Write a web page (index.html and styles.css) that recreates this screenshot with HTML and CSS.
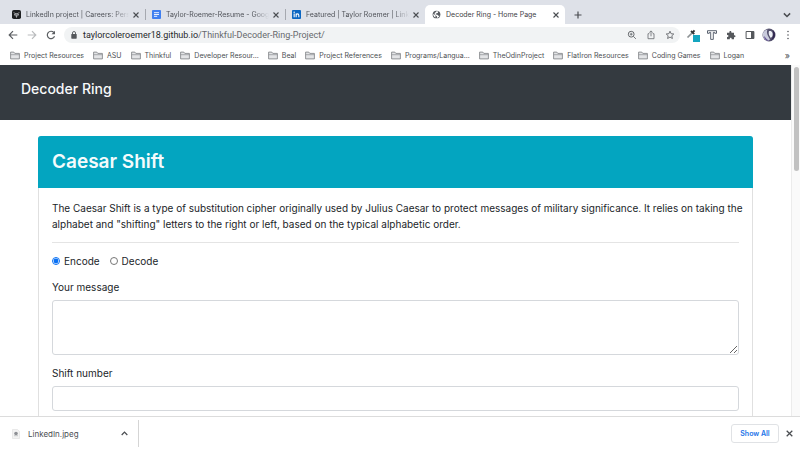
FILE: index.html
```html
<!DOCTYPE html>
<html lang="en">
<head>
<meta charset="utf-8">
<title>Decoder Ring - Home Page</title>
<link rel="stylesheet" href="styles.css">
</head>
<body>
<svg class="defs" aria-hidden="true">
  <symbol id="close" viewBox="0 0 8 8"><path d="M1.500 1.500l5 5M6.500 1.500l-5 5" fill="none" stroke="currentColor" stroke-width="1.100"/></symbol>
  <symbol id="folder" viewBox="0 0 10 9"><path d="M.6 7.9V1.1h3.2l1 1.3h4.6v5.5z" fill="#e3e4e6" stroke="#7b7e82" stroke-width=".8"/><path d="M.6 3.7h8.8" stroke="#8b8e92" stroke-width=".7"/></symbol>
</svg>

<nav class="tabs" aria-label="Tabs">
  <div class="tab">
    <svg class="favicon" viewBox="0 0 10 10"><rect width="10" height="10" rx="2" fill="#1e2022"/><path d="M2 2.5l1.5 1.6h3L8 2.5M3.5 4.1L5 6l1.500-1.900M5 6v2.500M2.500 4.500L4 7M7.500 4.500L6 7" fill="none" stroke="#d8dadd" stroke-width=".8"/></svg>
    <span class="tab-title">LinkedIn project | Careers: Pers</span>
    <button class="tab-close" aria-label="Close tab"><svg><use href="#close"/></svg></button>
  </div>
  <div class="tab divided">
    <svg class="favicon" viewBox="0 0 10 10"><rect width="10" height="10" rx="1" fill="#3f7ff0"/><path d="M2.200 3h5.600M2.200 5h5.600M2.200 7h3.600" stroke="#fff"/></svg>
    <span class="tab-title">Taylor-Roemer-Resume - Goog</span>
    <button class="tab-close" aria-label="Close tab"><svg><use href="#close"/></svg></button>
  </div>
  <div class="tab divided">
    <svg class="favicon" viewBox="0 0 10 10"><rect width="10" height="10" rx="1" fill="#0b66c2"/><path d="M2.400 4v4M4.600 8V4M4.600 6c0-2.300 3-2.300 3 0v2" fill="none" stroke="#fff" stroke-width="1.200"/><circle cx="2.400" cy="2.400" r=".8" fill="#fff"/></svg>
    <span class="tab-title">Featured | Taylor Roemer | Link</span>
    <button class="tab-close" aria-label="Close tab"><svg><use href="#close"/></svg></button>
  </div>
  <div class="tab active">
    <svg class="favicon" viewBox="0 0 10 10"><circle cx="5" cy="5" r="4.300" fill="#55595e"/><path d="M1.500 4.200l2.200 1.700.3 2.500C2.200 8 1.100 6 1.500 4.200zM5 1.500l2 .3-.6 1.500-2 .5-.3 1.200 2 .2.900 1.300 1.300-.2C7.600 8 6.500 8.500 5.500 8.600l.1-1.500-2-1.600-.8-1.700z" fill="#fff"/></svg>
    <span class="tab-title">Decoder Ring - Home Page</span>
    <button class="tab-close" aria-label="Close tab"><svg><use href="#close"/></svg></button>
  </div>
  <button class="new-tab" aria-label="New tab"><svg viewBox="0 0 8 8"><path d="M4 .5v7M.5 4h7" stroke="currentColor" stroke-width="1.200"/></svg></button>
  <button class="tab-search" aria-label="Search tabs"><svg viewBox="0 0 8 8"><path d="M1.500 2.700L4 5.200l2.500-2.500" fill="none" stroke="currentColor" stroke-width="1.200"/></svg></button>
</nav>

<div class="toolbar">
  <button aria-label="Back"><svg viewBox="0 0 10 10"><path d="M9.300 5H1.500M5 1.200L1.200 5 5 8.800" fill="none" stroke="#5a5d61" stroke-width="1.200"/></svg></button>
  <button aria-label="Forward"><svg viewBox="0 0 10 10"><path d="M.7 5h7.800M5 1.200L8.800 5 5 8.800" fill="none" stroke="#babcbe" stroke-width="1.200"/></svg></button>
  <button aria-label="Reload"><svg viewBox="0 0 10 10"><path d="M8.500 6.200A3.700 3.700 0 1 1 7.800 2.500" fill="none" stroke="#5a5d61" stroke-width="1.200"/><path d="M9 .8v3.500H5.500z" fill="#5a5d61"/></svg></button>
  <div class="omnibox">
    <svg class="lock" viewBox="0 0 6 8"><rect x=".3" y="3" width="5.400" height="4.700" rx=".6" fill="#55585c"/><path d="M1.500 3V2a1.500 1.500 0 0 1 3 0v1" fill="none" stroke="#55585c" stroke-width=".9"/></svg>
    <a class="url" href="#"><span>taylorcoleroemer18.github.io</span>/Thinkful-Decoder-Ring-Project/</a>
    <button aria-label="Zoom"><svg viewBox="0 0 10 10"><circle cx="4.200" cy="4.200" r="2.900" fill="none" stroke="#696c70"/><path d="M6.300 6.300l2.600 2.600M2.800 4.200h2.800M4.200 2.800v2.800" stroke="#696c70" stroke-width=".9"/></svg></button>
    <button aria-label="Share"><svg viewBox="0 0 10 10"><path d="M3.300 3.700H2v5h6v-5H6.700M5 6.300V1M3.300 2.500L5 .9l1.700 1.600" fill="none" stroke="#74777b" stroke-width=".9"/></svg></button>
    <button aria-label="Bookmark"><svg viewBox="0 0 10 10"><path d="M5 1.200l1.100 2.500 2.700.3-2 1.800.6 2.700L5 7.100 2.600 8.500l.6-2.700-2-1.800 2.700-.3z" fill="none" stroke="#66696d" stroke-width=".9"/></svg></button>
  </div>
  <div class="extensions">
    <button class="wide" aria-label="Colour picker"><svg viewBox="0 0 14 14"><rect x="7" y="7" width="7" height="7" fill="#14a5bf"/><path d="M1.500 9.500l4.700-4.700" stroke="#8d9295" stroke-width="1.700"/><path d="M5 3l3.200 3.200M6.300 5L8.500 2.300" stroke="#343638" stroke-width="1.900"/></svg></button>
    <button aria-label="Font inspector"><svg viewBox="0 0 10 10"><path d="M.5 3.300V.7h9v2.600H7.700V2.400H6.300v7H3.700v-7H2.300v.9z" fill="#fff" stroke="#4b5262" stroke-width=".9"/></svg></button>
    <button aria-label="Extensions"><svg viewBox="0 0 10 10"><path d="M1 2.800h2.400c-.6-2.400 2.500-2.400 2 0H8v2.400c2-.4 2 2.300 0 1.900V9.300H5.700c.3-2-2.300-2-1.900 0H1V7c2 .2 2-2.200 0-1.900z" fill="#55585c"/></svg></button>
    <button aria-label="Side panel"><svg viewBox="0 0 10 10"><path d="M1.100 1.500h7.800v7H1.100z" fill="none" stroke="#55585c"/><path d="M6 1.500h3v7H6z" fill="#55585c"/></svg></button>
    <button class="wide" aria-label="Profile"><svg viewBox="0 0 14 14"><circle cx="7" cy="7" r="6.500" fill="#56536f"/><path d="M1 5C2.300 2.500 4 1.700 5.500 1.500c-1 2-.5 4 .3 6L8 11.500 6 13C2.500 12 0 8.500 1 5z" fill="#c9cbdc"/><path d="M7 3c3-.7 4.500 2 3.300 5.500L8.700 10C8 8 6 7 7 3z" fill="#eef0f6"/><path d="M10.500 2c3 2 3.300 6 1 8.500L9 12.500c2-3 3-6 1.500-10.500z" fill="#30264f"/><path d="M2.500 8c1 2 2.500 3.500 4.500 5C4 13 1.500 10.500 2.500 8z" fill="#655594"/></svg></button>
    <button aria-label="Menu"><svg viewBox="0 0 10 10"><g fill="#5b5e62"><circle cx="5" cy="1.500" r=".8"/><circle cx="5" cy="5" r=".8"/><circle cx="5" cy="8.500" r=".8"/></g></svg></button>
  </div>
</div>

<nav class="bookmarks" aria-label="Bookmarks">
  <a href="#"><svg><use href="#folder"/></svg>Project Resources</a>
  <a href="#"><svg><use href="#folder"/></svg>ASU</a>
  <a href="#"><svg><use href="#folder"/></svg>Thinkful</a>
  <a href="#"><svg><use href="#folder"/></svg>Developer Resour...</a>
  <a href="#"><svg><use href="#folder"/></svg>Beal</a>
  <a href="#"><svg><use href="#folder"/></svg>Project References</a>
  <a href="#"><svg><use href="#folder"/></svg>Programs/Langua...</a>
  <a href="#"><svg><use href="#folder"/></svg>TheOdinProject</a>
  <a href="#"><svg><use href="#folder"/></svg>FlatIron Resources</a>
  <a href="#"><svg><use href="#folder"/></svg>Coding Games</a>
  <a href="#"><svg><use href="#folder"/></svg>Logan</a>
  <button class="more" aria-label="More bookmarks">»</button>
</nav>

<div class="viewport">
  <div class="page">
    <header class="navbar"><a href="#">Decoder Ring</a></header>
    <main>
      <section class="card">
        <h1>Caesar Shift</h1>
        <form class="card-body">
          <p>The Caesar Shift is a type of substitution cipher originally used by Julius Caesar to protect messages of military significance. It relies on taking the alphabet and "shifting" letters to the right or left, based on the typical alphabetic order.</p>
          <hr>
          <div class="choices">
            <input type="radio" name="mode" id="encode" checked><label for="encode">Encode</label>
            <input type="radio" name="mode" id="decode"><label for="decode">Decode</label>
          </div>
          <div class="field"><label for="message">Your message</label><textarea id="message"></textarea></div>
          <div class="field"><label for="shift">Shift number</label><input type="text" id="shift"></div>
        </form>
      </section>
    </main>
  </div>
  <div class="scrollbar"><div class="thumb"></div></div>
</div>

<footer class="downloads">
  <div class="download">
    <svg class="file" viewBox="0 0 10 10"><path d="M1.500.5h5L8.500 2.500v7h-7z" fill="#f3f3f3" stroke="#dedede" stroke-width=".6"/><circle cx="5" cy="4.500" r="1.800" fill="#8e9095"/><path d="M3 6.700h4" stroke="#b8babd" stroke-width=".8"/></svg>
    <span>LinkedIn.jpeg</span>
    <button aria-label="Download options"><svg viewBox="0 0 8 8"><path d="M1.500 5.300L4 2.800l2.500 2.500" fill="none" stroke="currentColor" stroke-width="1.100"/></svg></button>
  </div>
  <button class="show-all">Show All</button>
  <button class="dismiss" aria-label="Close downloads"><svg><use href="#close"/></svg></button>
</footer>
</body>
</html>
```
FILE: styles.css
```css
* { box-sizing: border-box; }

body {
  margin: 0;
  height: 100vh;
  display: flex;
  flex-direction: column;
  overflow: hidden;
  background: #fff;
  color: #212529;
  font-family: Inter, "Liberation Sans", sans-serif;
  font-size: 7px;
}

button {
  display: flex;
  align-items: center;
  justify-content: center;
  flex: none;
  padding: 0;
  border: 0;
  background: none;
  color: #4a4d51;
  font: inherit;
}

a { color: inherit; text-decoration: none; }
svg { display: block; flex: none; }
.defs { position: absolute; width: 0; height: 0; }

/* Tab strip */
.tabs {
  display: flex;
  flex: none;
  height: 24px;
  padding: 5px 8px 0 5px;
  background: #dee1e8;
  color: #505359;
}

.tab {
  display: flex;
  align-items: center;
  flex: 0 1 140px;
  min-width: 0;
  padding: 0 5px 0 7px;
}

.divided {
  background: linear-gradient(#a6a9b0, #a6a9b0) left center / 1px 11px no-repeat;
}

.active {
  border-radius: 5px 5px 0 0;
  background: #fff;
  color: #3f4246;
}

.favicon { width: 9px; height: 9px; }

.tab-title {
  flex: 1;
  min-width: 0;
  margin: 0 3px 0 5px;
  overflow: hidden;
  white-space: nowrap;
  -webkit-mask-image: linear-gradient(to right, #000 85%, transparent);
  mask-image: linear-gradient(to right, #000 85%, transparent);
}

.active .tab-title { -webkit-mask-image: none; mask-image: none; }
.tab-close, .tab-close svg { width: 8px; height: 8px; }
.new-tab { width: 26px; }
.new-tab svg { width: 8px; height: 8px; }
.tab-search { margin-left: auto; }
.tab-search svg { width: 10px; height: 10px; }

/* Toolbar */
.toolbar {
  display: flex;
  align-items: center;
  flex: none;
  height: 22px;
  padding: 0 3px;
}

.toolbar button { width: 19px; height: 16px; }
.toolbar svg { width: 10px; height: 10px; }

.omnibox {
  display: flex;
  align-items: center;
  flex: 1;
  height: 16px;
  margin-left: 4px;
  padding: 0 1px 0 7px;
  border-radius: 8px;
  background: #f1f3f4;
}

.omnibox .lock { width: 6px; height: 8px; }
.url { flex: 1; margin-left: 6px; color: #66696d; font-family: Roboto, sans-serif; font-size: 9px; }
.url span { color: #25272a; }

.extensions { display: flex; align-items: center; margin-left: 3px; }
.extensions .wide svg { width: 14px; height: 14px; }

/* Bookmarks */
.bookmarks {
  display: flex;
  align-items: center;
  gap: 9px;
  flex: none;
  height: 19px;
  padding: 0 10px 1px;
  color: #4b4e52;
  white-space: nowrap;
}

.bookmarks a { display: flex; align-items: center; gap: 4px; }
.bookmarks svg { width: 10px; height: 9px; }
.more { margin-left: auto; font-size: 9px; }

/* Page */
.viewport {
  display: flex;
  flex: 1;
  min-height: 0;
  overflow: hidden;
}

.page {
  flex: 1;
  min-width: 0;
  font-size: 10px;
  line-height: 16px;
}

.navbar {
  height: 55px;
  padding: 14px 21px;
  background: #343a40;
  color: #f8f9fa;
  font-size: 14px;
  font-weight: 500;
  line-height: 20px;
}

main { padding: 16px 38px; }

.card {
  border: 1px solid #e0e0e0;
  border-radius: 3px;
}

.card h1 {
  margin: -1px -1px 0;
  padding: 12px 14px;
  border-radius: 3px 3px 0 0;
  background: #03a5c0;
  color: #f5fbfc;
  font-size: 19px;
  font-weight: 600;
  line-height: 28px;
}

.card-body { padding: 12px 13px; }
.card-body p { margin: 0 -4px 0 0; }

hr {
  margin: 10px 0;
  border: 0;
  border-top: 1px solid #e4e4e4;
}

.choices { display: flex; align-items: center; margin-bottom: 10px; }
.choices input { width: 8px; height: 8px; margin: 0 4px 0 0; accent-color: #0870f4; }
.choices label { margin-right: 10px; }

.field { display: flex; flex-direction: column; gap: 5px; margin-bottom: 10px; }

.field textarea, .field input {
  width: 100%;
  height: 25px;
  padding: 4px 8px;
  border: 1px solid #d5d8dc;
  border-radius: 3px;
  background: #fff;
  font: inherit;
}

.field textarea { height: 55px; resize: vertical; }

.scrollbar {
  flex: none;
  width: 9px;
  padding: 2px 1px 2px 2px;
  border-left: 1px solid #ececec;
  background: #fafafa;
}

.thumb { width: 5px; height: 30%; border-radius: 3px; background: #c1c1c1; }

/* Downloads */
.downloads {
  display: flex;
  align-items: center;
  flex: none;
  height: 34px;
  padding: 0 6px 0 0;
  border-top: 1px solid #dcdcdc;
  background: #fff;
}

.download {
  display: flex;
  align-items: center;
  width: 139px;
  height: 27px;
  margin-right: auto;
  padding: 0 9px 0 11px;
  border-right: 1px solid #d5d5d5;
  color: #4b4e52;
  font-size: 8px;
}

.file { width: 10px; height: 10px; }
.download span { flex: 1; margin-left: 7px; }
.download button svg, .dismiss svg { width: 9px; height: 9px; }

.show-all {
  width: 48px;
  height: 19px;
  border: 1px solid #e0e2e5;
  border-radius: 3px;
  color: #1a73e8;
  font-size: 7px;
  font-weight: 600;
}

.dismiss { margin-left: 6px; }
```
